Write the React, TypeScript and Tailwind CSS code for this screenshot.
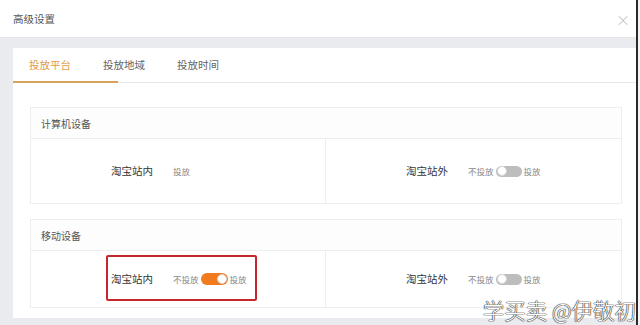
import React from "react";

const font = { fontFamily: '"Noto Sans CJK SC", "Noto Sans", sans-serif' };

function Toggle({ on }: { on?: boolean }) {
  return (
    <span
      className={
        on
          ? "flex h-[12px] w-[27px] items-center justify-end rounded-full bg-[#f27a1f] px-[1px]"
          : "flex h-[11px] w-[26px] items-center justify-start rounded-full bg-[#bdbdbd] px-[1px]"
      }
    >
      <span className="h-[10px] w-[10px] rounded-full border border-[#d6d6d6] bg-white" />
    </span>
  );
}

function Cell({
  label,
  mode,
  boxed,
  divider,
}: {
  label: string;
  mode: "plain" | "off" | "on";
  boxed?: boolean;
  divider?: boolean;
}) {
  return (
    <div
      className={`relative flex min-w-0 items-center pl-[80px] ${
        divider ? "border-r border-[#eeeeee]" : ""
      }`}
    >
      <span className="text-[10.5px] text-[#333]">{label}</span>
      {mode === "plain" ? (
        <span className="ml-[20px] text-[8.5px] text-[#888]">投放</span>
      ) : (
        <div className="ml-[20px] flex items-center gap-[2px] text-[8.5px] text-[#888]">
          <span>不投放</span>
          <Toggle on={mode === "on"} />
          <span>投放</span>
        </div>
      )}
      {boxed && (
        <div className="absolute left-[75px] top-[4px] h-[46px] w-[151px] rounded-[2px] border-2 border-[#c4282e]" />
      )}
    </div>
  );
}

function Section({
  title,
  bodyH,
  children,
}: {
  title: string;
  bodyH: string;
  children: React.ReactNode;
}) {
  return (
    <div className="border border-[#eeeeee] bg-white">
      <div className="flex h-[31px] items-center border-b border-[#eeeeee] bg-[#fdfdfd] pl-[10px] text-[10px] text-[#555]">
        {title}
      </div>
      <div className={`grid grid-cols-2 ${bodyH}`}>{children}</div>
    </div>
  );
}

export default function App() {
  return (
    <div style={font} className="flex h-[325px] w-[640px] overflow-hidden bg-white">
      <div className="relative flex w-[636px] flex-col bg-[#e9ebee]">
        <div className="flex h-[38px] items-center justify-between border-b border-[#e6e6e6] bg-white pl-[13px] pr-[6px]">
          <span className="text-[10.5px] text-[#555]">高级设置</span>
          <span className="text-[14px] font-light leading-none text-[#bbb]">×</span>
        </div>
        <div className="ml-[13px] mt-[10px] flex h-[270px] flex-col bg-white">
          <div className="relative flex h-[35px] items-center gap-[32px] border-b border-[#e8e8e8] pl-[16px] text-[10.5px] text-[#666]">
            <span className="text-[#e39a45]">投放平台</span>
            <span>投放地域</span>
            <span>投放时间</span>
            <div className="absolute bottom-[-1px] left-0 h-[2px] w-[105px] bg-[#d9a25a]" />
          </div>
          <div className="ml-[17px] mr-[14px] mt-[24px] flex flex-col gap-[15px]">
            <Section title="计算机设备" bodyH="h-[64px]">
              <Cell label="淘宝站内" mode="plain" divider />
              <Cell label="淘宝站外" mode="off" />
            </Section>
            <Section title="移动设备" bodyH="h-[56px]">
              <Cell label="淘宝站内" mode="on" boxed divider />
              <Cell label="淘宝站外" mode="off" />
            </Section>
          </div>
        </div>
        <div className="absolute bottom-[5px] right-[0px] text-[21.5px] font-light leading-none text-white [text-shadow:0_0_1px_#222,0_0_1px_#222,0_0_1px_#222]">
          学买卖 @伊敬初
        </div>
      </div>
      <div className="w-[2px] bg-[#2a2a2a]" />
      <div className="flex-1 bg-[#f4f4f4]" />
    </div>
  );
}
